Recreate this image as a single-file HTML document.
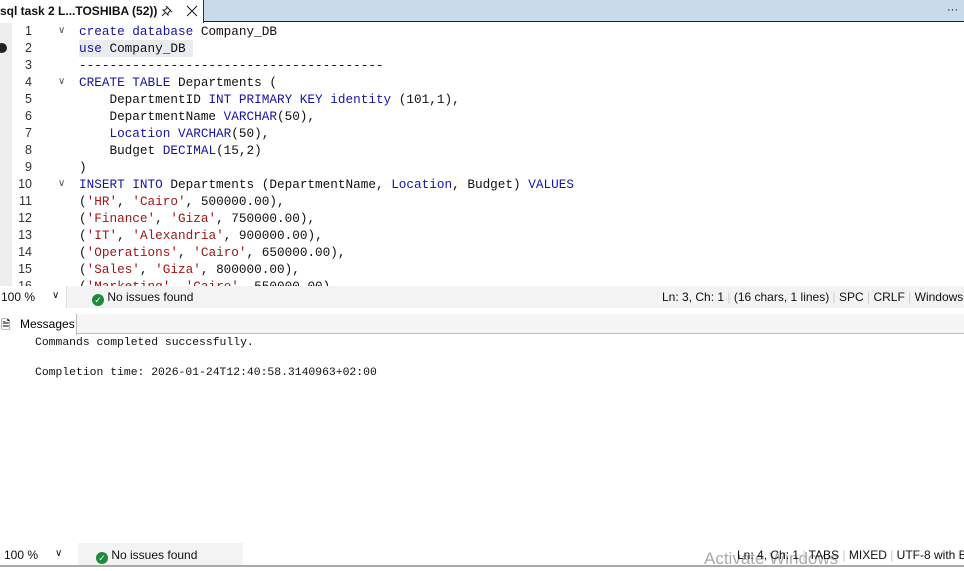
<!DOCTYPE html>
<html><head><meta charset="utf-8"><style>
*{margin:0;padding:0;box-sizing:border-box}
body{width:964px;height:571px;overflow:hidden;background:#fff;font-family:"Liberation Sans",sans-serif;position:relative;white-space:nowrap}
.tabbar{position:absolute;left:0;top:0;width:964px;height:22px;background:#c9dae8;border-bottom:1px solid #222}
.tab{position:absolute;left:0;top:0;width:204px;height:23px;background:#fff;border-right:1px solid #333;font-size:12px;font-weight:bold;color:#111}
.editor{position:absolute;left:0;top:23px;width:964px;height:263px;overflow:hidden;background:#fff}
.gutter{position:absolute;left:0;top:0;width:12px;height:263px;background:#eeeeee}
.ln{position:absolute;left:14px;width:18px;text-align:right;font-size:12.5px;color:#333}
.code{position:absolute;left:79px;font-family:"Liberation Mono",monospace;font-size:12.7px;color:#111;white-space:pre}
.k{color:#1414a8}.s{color:#a31515}
.fold{position:absolute;left:58px;font-size:10px;color:#555}
.status{position:absolute;left:0;top:286px;width:964px;height:22px;background:#f3f3f3;font-size:12px;color:#111}
.ok{display:inline-block;width:12px;height:12px;border-radius:50%;background:#1e8a3a;color:#fff;font-size:9px;text-align:center;line-height:12px;vertical-align:-2px}
.msgs{position:absolute;left:0;top:314px;width:964px;height:20px;border-bottom:1px solid #bbb;background:#f5f5f5}
.mtab{position:absolute;left:0;top:0;width:77px;height:21px;background:#fff;border-right:1px solid #bbb;font-size:12px;padding:3px 0 0 20px}
.out{position:absolute;left:35px;font-family:"Liberation Mono",monospace;font-size:11.4px;color:#111;white-space:pre}
.bot{position:absolute;left:0;top:543px;width:964px;height:24px;font-size:12px;color:#111;border-bottom:2px solid #aaa;overflow:hidden}
</style></head><body>
<div class="tabbar"><span style="position:absolute;right:6px;top:4px;font-size:11px">···</span></div>
<div class="tab"><span style="position:absolute;left:0;top:4px">sql task 2 L...TOSHIBA (52))</span>
<svg style="position:absolute;left:161px;top:5px" width="12" height="12" viewBox="0 0 12 12"><path d="M5 1 L11 7 M7 2 L4 5 L2 5 L7 10 L7 8 L10 5 M4 8 L1 11" stroke="#222" fill="none" stroke-width="1"/></svg>
<svg style="position:absolute;left:186px;top:5px" width="12" height="12" viewBox="0 0 12 12"><path d="M1 1 L11 11 M11 1 L1 11" stroke="#222" stroke-width="1.1"/></svg></div>
<div class="editor">
<div class="gutter"></div>
<div style="position:absolute;left:-3px;top:20px;width:10px;height:10px;border-radius:50%;background:#222"></div>
<div style="position:absolute;left:79px;top:17px;width:114px;height:17px;background:#e8ecf0"></div>
<div style="position:absolute;top:0;left:0;width:964px">
<div class="ln" style="top:1px">1</div><div class="ln" style="top:18px">2</div><div class="ln" style="top:35px">3</div><div class="ln" style="top:52px">4</div><div class="ln" style="top:69px">5</div><div class="ln" style="top:86px">6</div><div class="ln" style="top:103px">7</div><div class="ln" style="top:120px">8</div><div class="ln" style="top:137px">9</div><div class="ln" style="top:154px">10</div><div class="ln" style="top:171px">11</div><div class="ln" style="top:188px">12</div><div class="ln" style="top:205px">13</div><div class="ln" style="top:222px">14</div><div class="ln" style="top:239px">15</div><div class="ln" style="top:256px">16</div>
<div class="fold" style="top:2px">&#x2228;</div><div class="fold" style="top:53px">&#x2228;</div><div class="fold" style="top:155px">&#x2228;</div>
<div class="code" style="top:1px"><span class="k">create database</span> Company_DB</div>
<div class="code" style="top:18px"><span class="k">use</span> Company_DB</div>
<div class="code" style="top:35px">----------------------------------------</div>
<div class="code" style="top:52px"><span class="k">CREATE TABLE</span> Departments (</div>
<div class="code" style="top:69px">    DepartmentID <span class="k">INT PRIMARY KEY identity</span> (101,1),</div>
<div class="code" style="top:86px">    DepartmentName <span class="k">VARCHAR</span>(50),</div>
<div class="code" style="top:103px">    <span class="k">Location VARCHAR</span>(50),</div>
<div class="code" style="top:120px">    Budget <span class="k">DECIMAL</span>(15,2)</div>
<div class="code" style="top:137px">)</div>
<div class="code" style="top:154px"><span class="k">INSERT INTO</span> Departments (DepartmentName, <span class="k">Location</span>, Budget) <span class="k">VALUES</span></div>
<div class="code" style="top:171px">(<span class="s">'HR'</span>, <span class="s">'Cairo'</span>, 500000.00),</div>
<div class="code" style="top:188px">(<span class="s">'Finance'</span>, <span class="s">'Giza'</span>, 750000.00),</div>
<div class="code" style="top:205px">(<span class="s">'IT'</span>, <span class="s">'Alexandria'</span>, 900000.00),</div>
<div class="code" style="top:222px">(<span class="s">'Operations'</span>, <span class="s">'Cairo'</span>, 650000.00),</div>
<div class="code" style="top:239px">(<span class="s">'Sales'</span>, <span class="s">'Giza'</span>, 800000.00),</div>
<div class="code" style="top:256px">(<span class="s">'Marketing'</span>, <span class="s">'Cairo'</span>, 550000.00),</div>
</div></div>
<div class="status">
<div style="position:absolute;left:0;top:0;width:67px;height:22px;border-right:1px solid #ddd;background:#fff"><span style="position:absolute;left:1px;top:4px">100 %</span><span style="position:absolute;left:52px;top:4px;font-size:10px">&#x2228;</span></div>
<span style="position:absolute;left:92px;top:4px"><span class="ok">✓</span> No issues found</span>
<span style="position:absolute;left:662px;top:4px">Ln: 3, Ch: 1 <span style="color:#ccc">|</span> (16 chars, 1 lines) <span style="color:#ccc">|</span> SPC <span style="color:#ccc">|</span> CRLF <span style="color:#ccc">|</span> Windows 1</span>
</div>
<div class="msgs"><div class="mtab"><span style="position:absolute;left:1px;top:2px;font-size:12px">&#x1F5CE;</span>Messages</div></div>
<div class="out" style="top:337px">Commands completed successfully.</div>
<div class="out" style="top:367px">Completion time: 2026-01-24T12:40:58.3140963+02:00</div>
<div class="bot">
<div style="position:absolute;left:0;top:0;width:72px;height:24px;background:#fff"><span style="position:absolute;left:4px;top:5px">100 %</span><span style="position:absolute;left:55px;top:5px;font-size:10px">&#x2228;</span></div>
<div style="position:absolute;left:78px;top:0;width:165px;height:24px;background:#f3f3f3"><span style="position:absolute;left:18px;top:5px"><span class="ok">✓</span> No issues found</span></div>
<span style="position:absolute;left:704px;top:6px;font-size:17px;color:#aaa">Activate Windows</span>
<span style="position:absolute;left:737px;top:5px">Ln: 4, Ch: 1 <span style="color:#ccc">|</span> TABS <span style="color:#ccc">|</span> MIXED <span style="color:#ccc">|</span> UTF-8 with BOM</span>
</div>
</body></html>
